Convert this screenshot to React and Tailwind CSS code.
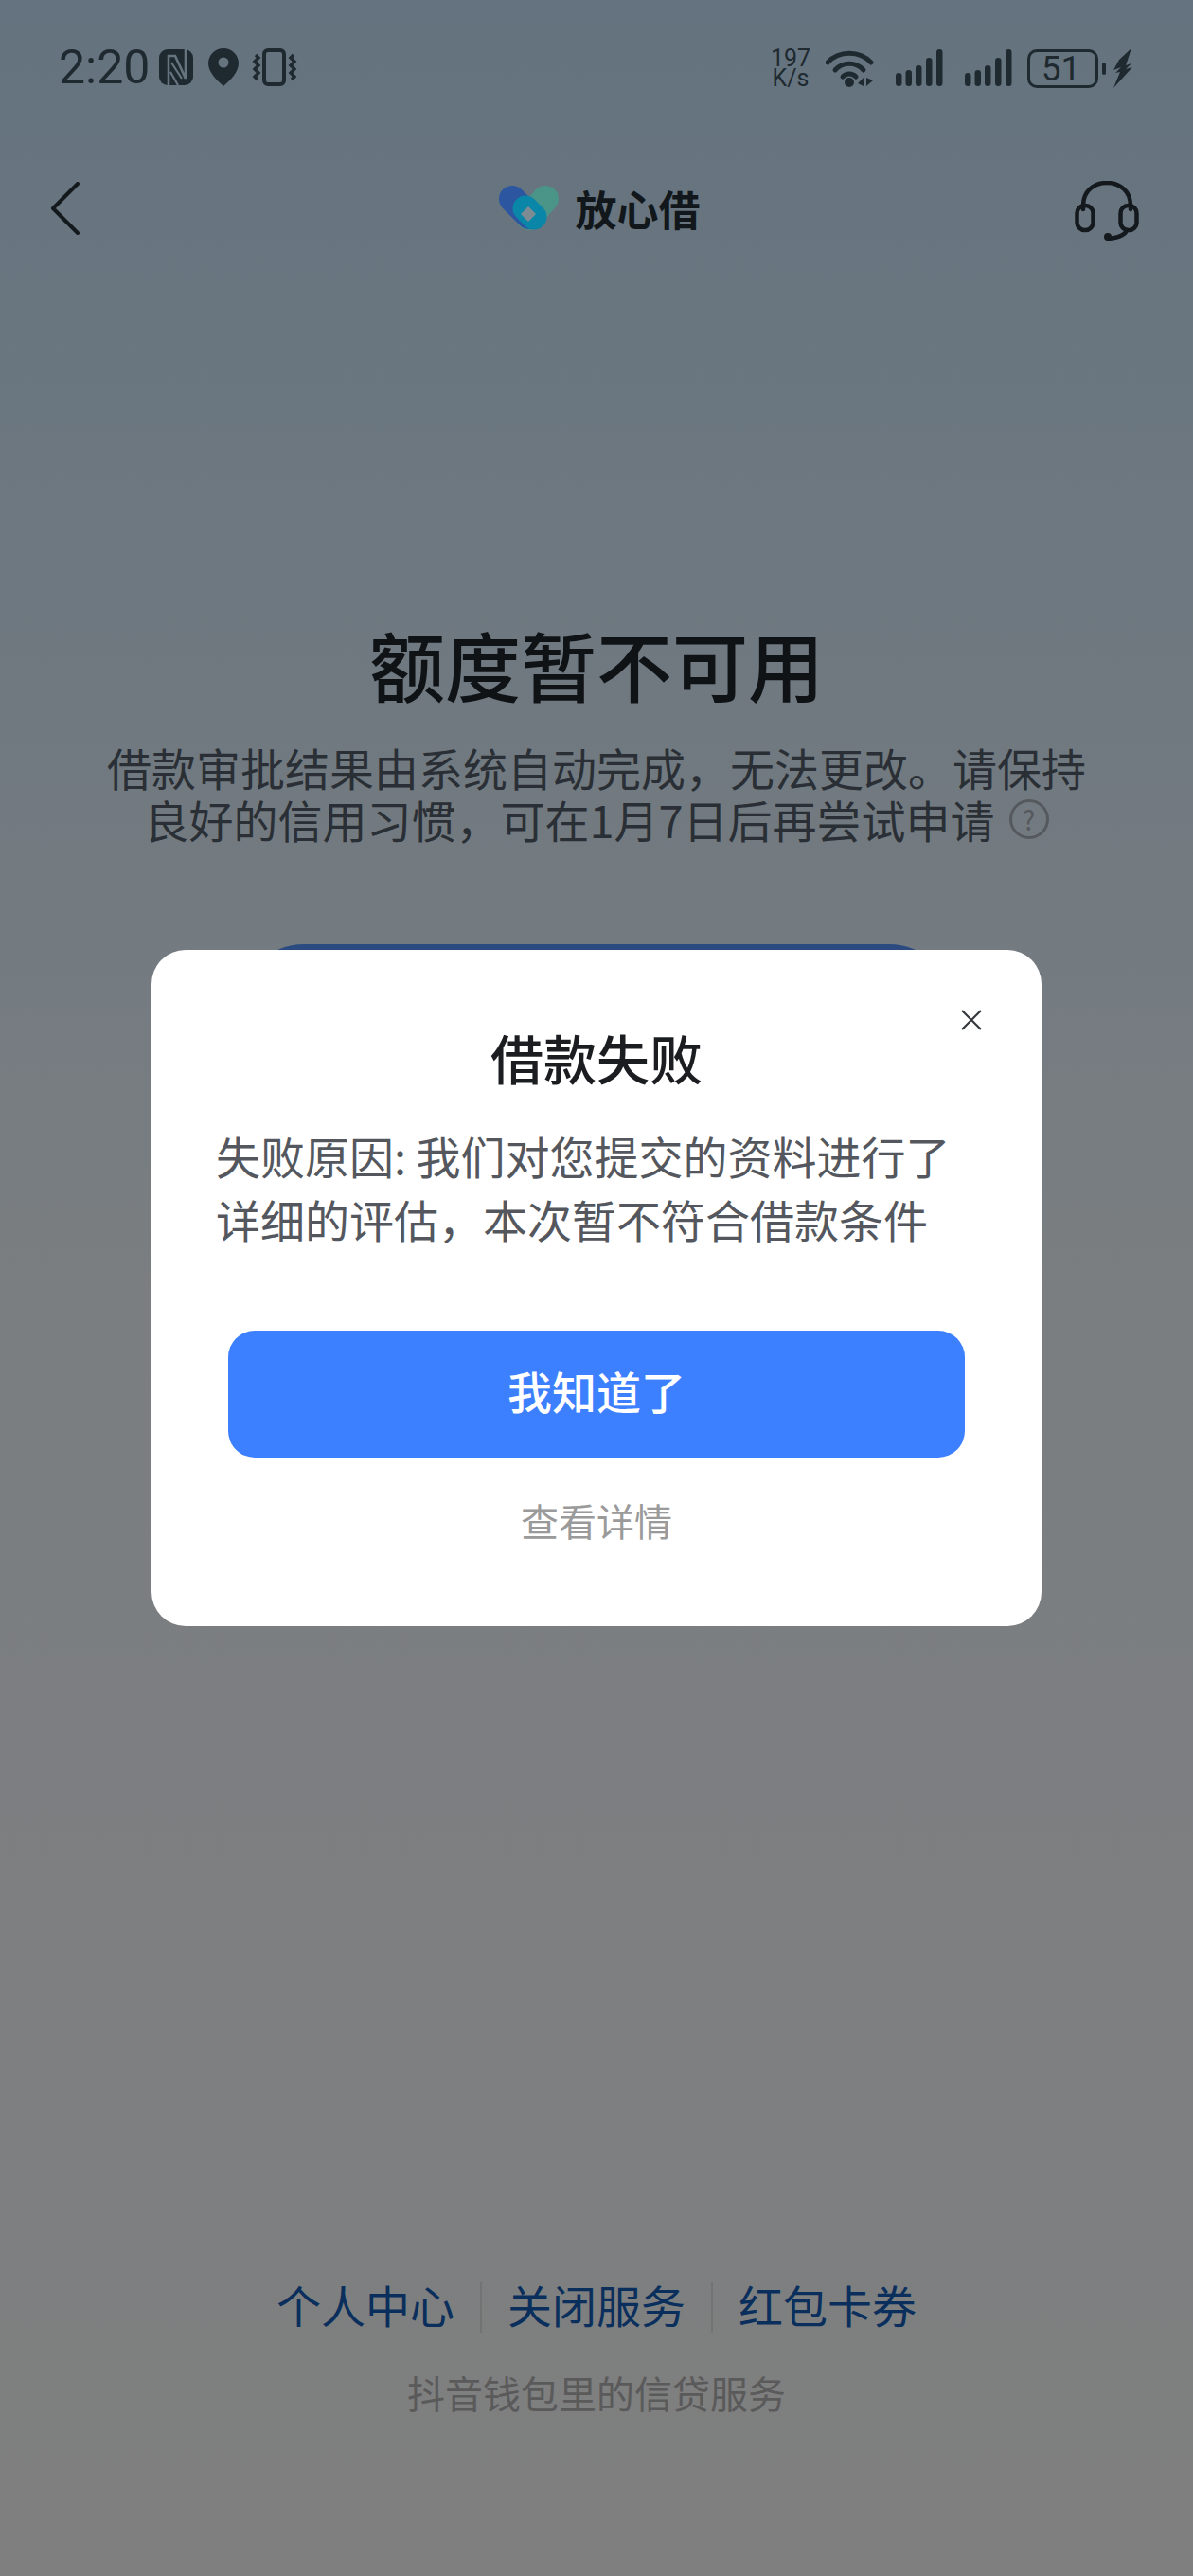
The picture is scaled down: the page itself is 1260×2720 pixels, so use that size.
const cjk = "font-['Noto_Sans_CJK_SC','Noto_Sans',sans-serif]";

function SignalBars() {
  return (
    <svg width="50" height="40" viewBox="0 0 50 40" fill="#1f2a30">
      <rect x="0" y="25" width="6.5" height="14" rx="3.2" />
      <rect x="10.5" y="22" width="6.5" height="17" rx="3.2" />
      <rect x="21" y="17" width="6.5" height="22" rx="3.2" />
      <rect x="32" y="9" width="6.5" height="30" rx="3.2" />
      <rect x="43" y="0" width="6.5" height="39" rx="3.2" />
    </svg>
  );
}

function StatusBar() {
  return (
    <div className="flex h-[93px] items-end justify-between pl-[62px] pr-[64px]">
      <div className="flex items-center">
        <span className="font-['Roboto',sans-serif] text-[50px] leading-[44px] text-[#1f2a30]">2:20</span>
        {/* nfc */}
        <svg className="ml-[10px]" width="36" height="38" viewBox="0 0 36 38">
          <rect width="36" height="38" rx="9" fill="#1f2a30" />
          <path d="M10 38V7h7l11 24V0" fill="none" stroke="#66747f" strokeWidth="2.6" />
          <path d="M13 14l11 17M12 24l8 14" fill="none" stroke="#66747f" strokeWidth="2.2" />
        </svg>
        {/* location */}
        <svg className="ml-[16px]" width="32" height="40" viewBox="0 0 32 40">
          <path d="M16 0C7 0 0 7 0 16c0 9 9 18 16 24 7-6 16-15 16-24C32 7 25 0 16 0z" fill="#1f2a30" />
          <circle cx="16" cy="15" r="5.5" fill="#66747f" />
        </svg>
        {/* vibrate */}
        <svg className="ml-[14px]" width="48" height="40" viewBox="0 0 48 40" fill="none" stroke="#1f2a30">
          <rect x="13" y="2" width="21" height="36" rx="4" strokeWidth="4" />
          <path d="M4 7l3 3-4 4 4 4-4 4 4 4-4 4 3 3" strokeWidth="3.4" />
          <path d="M44 7l-3 3 4 4-4 4 4 4-4 4 4 4-3 3" strokeWidth="3.4" />
        </svg>
      </div>
      <div className="flex items-center">
        <div className="flex w-[44px] flex-col items-center font-['Roboto',sans-serif] text-[25px] leading-[21px] text-[#1f2a30]">
          <span>197</span>
          <span>K/s</span>
        </div>
        {/* wifi */}
        <svg className="ml-[15px]" width="51" height="40" viewBox="0 0 51 40" fill="none" stroke="#1f2a30" strokeLinecap="round">
          <path d="M2 14C14 1 36 1 48 14" strokeWidth="5" />
          <path d="M10 22C18 13 32 13 40 22" strokeWidth="5" />
          <path d="M18 29c4-4 10-4 14 0" strokeWidth="5" />
          <circle cx="25" cy="35" r="5" fill="#1f2a30" stroke="none" />
          <path d="M40 30v9l-6-3zM43 30v9l7-6z" fill="#1f2a30" stroke="none" />
        </svg>
        <div className="ml-[23px]"><SignalBars /></div>
        <div className="ml-[23px]"><SignalBars /></div>
        {/* battery */}
        <div className="ml-[16px] flex h-[41px] w-[75px] items-center justify-center rounded-[10px] border-[3px] border-[#1f2a30] pr-[4px] font-['Roboto',sans-serif] text-[37px] leading-none text-[#1f2a30]">51</div>
        <div className="ml-[4px] h-[13px] w-[4px] rounded-[2px] bg-[#1f2a30]" />
        <svg className="ml-[7px]" width="21" height="42" viewBox="0 0 21 42" fill="#1f2a30">
          <path d="M20 0L7 12 1 23l8-3-6 6 5-1-7 17L21 20l-7 2 6-6-6 2z" />
        </svg>
      </div>
    </div>
  );
}

function NavBar() {
  return (
    <div className="mt-[94px] flex h-[66px] items-center justify-between pl-[54px] pr-[57px]">
      <svg width="30" height="56" viewBox="0 0 30 56" fill="none" stroke="#14191d" strokeWidth="4" strokeLinecap="round" strokeLinejoin="round">
        <path d="M28 2L2 28l26 26" />
      </svg>
      <div className="ml-[46px] flex items-center">
        <svg width="65" height="50" viewBox="0 0 65 50" fill="none" strokeLinecap="round">
          <path d="M50 15L33 34" stroke="#4b9488" strokeWidth="28" />
          <path d="M15 15l18 18" stroke="#2c56a0" strokeWidth="28" />
          <path d="M29 25l9 9" stroke="#0a86a8" strokeWidth="27" />
          <path d="M32 22l8 8-8 8-8-8z" transform="translate(0 1)" fill="#7d8b93" />
        </svg>
        <span className={`${cjk} ml-[17px] text-[44px] font-bold leading-none text-[#12171b]`}>放心借</span>
      </div>
      <svg className="mt-[6px]" width="68" height="64" viewBox="0 0 68 64" fill="none" stroke="#14191d" strokeWidth="4.5" strokeLinecap="round">
        <path d="M9 30V26C9 11 20 2 34 2s25 9 25 24v4" />
        <rect x="2.5" y="26" width="17" height="26" rx="8" />
        <rect x="48.5" y="26" width="17" height="26" rx="8" />
        <path d="M55 52c-2 6-10 8-20 9" />
        <circle cx="35" cy="59" r="4" fill="#14191d" stroke="none" />
      </svg>
    </div>
  );
}

function Modal() {
  return (
    <div className={`${cjk} absolute left-[160px] top-[1003px] flex h-[714px] w-[940px] flex-col rounded-[36px] bg-white`}>
      <svg className="absolute right-[62px] top-[62px]" width="24" height="24" viewBox="0 0 24 24" fill="none" stroke="#33383d" strokeWidth="2.2">
        <path d="M2 2l20 20M22 2L2 22" />
      </svg>
      <h2 className="mt-[77px] text-center text-[56px] font-medium leading-[72px] text-[#1b1d20]">借款失败</h2>
      <p className="mt-[34px] px-[68px] text-[47px] leading-[67px] text-[#54585e]">
        失败原因: 我们对您提交的资料进行了
        <br />
        详细的评估，本次暂不符合借款条件
      </p>
      <button className="mx-[81px] mt-[85px] h-[134px] rounded-[28px] bg-[#3d80ff] pb-[8px] text-[47px] font-medium text-white">我知道了</button>
      <div className="mt-[42px] text-center text-[40px] leading-[48px] text-[#9a9a9a]">查看详情</div>
    </div>
  );
}

export default function App() {
  return (
    <div className={`${cjk} relative flex h-[2720px] w-full flex-col overflow-hidden bg-gradient-to-b from-[#64737f] via-[#7a7e81] via-50% to-[#7f7f7f]`}>
      <StatusBar />
      <NavBar />

      <h1 className="mt-[397px] text-center text-[80px] font-medium leading-[100px] text-[#101316]">额度暂不可用</h1>
      <div className="mt-[32px] text-center text-[47px] leading-[55px] text-[#2a2f35]">
        <div>借款审批结果由系统自动完成，无法更改。请保持</div>
        <div className="flex items-center justify-center">
          良好的信用习惯，可在1月7日后再尝试申请
          <span className="ml-[15px] flex h-[42px] w-[42px] items-center justify-center rounded-full border-[3px] border-[#55595d] text-[28px] leading-none text-[#55595d]">?</span>
        </div>
      </div>

      {/* button behind the modal */}
      <div className="mx-[254px] mt-[105px] h-[134px] rounded-full bg-[#2a4a80]" />

      <div className="mt-auto flex flex-col items-center pb-[170px]">
        <div className="flex h-[53px] items-center pb-[6px] text-[47px] text-[#0a2f5c]">
          <span>个人中心</span>
          <div className="mx-[27px] mt-[6px] h-[53px] w-[2px] bg-[#737373]" />
          <span>关闭服务</span>
          <div className="mx-[27px] mt-[6px] h-[53px] w-[2px] bg-[#737373]" />
          <span>红包卡券</span>
        </div>
        <div className="mt-[39px] text-[40px] leading-[48px] text-[#5a5a5a]">抖音钱包里的信贷服务</div>
      </div>

      <Modal />
    </div>
  );
}
